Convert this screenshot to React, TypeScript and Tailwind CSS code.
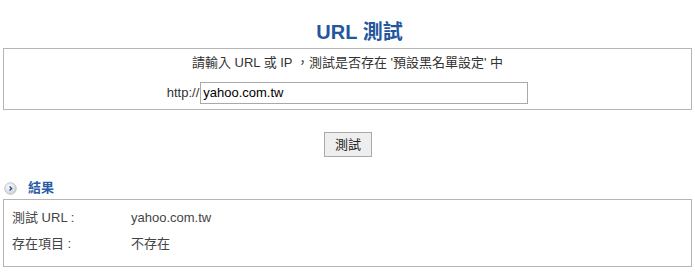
import React from 'react';

const font = { fontFamily: '"Liberation Sans", "Noto Sans CJK TC", sans-serif' };

function ArrowDot() {
  return (
    <svg width="13" height="13" viewBox="0 0 13 13" className="shrink-0">
      <defs>
        <radialGradient id="g" cx="40%" cy="35%" r="70%">
          <stop offset="0%" stopColor="#ffffff" />
          <stop offset="100%" stopColor="#c9cdd3" />
        </radialGradient>
      </defs>
      <circle cx="6.5" cy="6.5" r="5.8" fill="url(#g)" stroke="#b8bcc2" strokeWidth="0.8" />
      <path d="M5.6 4.4 L7.6 6.5 L5.6 8.6" fill="none" stroke="#1e4f93" strokeWidth="1.4" />
    </svg>
  );
}

export default function App() {
  return (
    <div className="w-[695px] h-[272px] bg-white text-[#333] text-[13px]" style={font}>
      <div className="pt-[21px] pl-[24px] text-center text-[20px] font-bold leading-[22px] text-[#24569d]">URL 測試</div>
      <div className="mx-[3px] mt-[5px] h-[62px] border border-[#b5b5b5] flex flex-col items-center">
        <div className="mt-[6px] leading-[16px] text-[#333]">請輸入 URL 或 IP ，測試是否存在 '預設黑名單設定' 中</div>
        <div className="mt-[11px] flex items-center">
          <span className="text-[#333]">http://</span>
          <div className="ml-[1px] w-[328px] h-[22px] border border-[#a9a9a9] flex items-center px-[2px] text-[13px] text-black">
            yahoo.com.tw
          </div>
        </div>
      </div>
      <div className="mt-[22px] flex justify-center">
        <button className="ml-[1px] w-[48px] h-[25px] border border-[#a9a9a9] bg-[#eeeeee] text-[13px] text-[#222]" style={font}>
          測試
        </button>
      </div>
      <div className="mt-[24px] ml-[4px] flex items-center h-[14px]">
        <ArrowDot />
        <span className="ml-[11px] font-bold text-[#2a5da5] text-[13px]">結果</span>
      </div>
      <div className="mx-[3px] mt-[4px] h-[68px] border border-[#b5b5b5] pl-[8px] pt-[10px]">
        <div className="flex h-[16px] items-center">
          <span className="w-[119px] text-[#444]">測試 URL :</span>
          <span className="text-[#444]">yahoo.com.tw</span>
        </div>
        <div className="flex h-[16px] items-center mt-[10px]">
          <span className="w-[119px] text-[#444]">存在項目 :</span>
          <span className="text-[#444]">不存在</span>
        </div>
      </div>
    </div>
  );
}
